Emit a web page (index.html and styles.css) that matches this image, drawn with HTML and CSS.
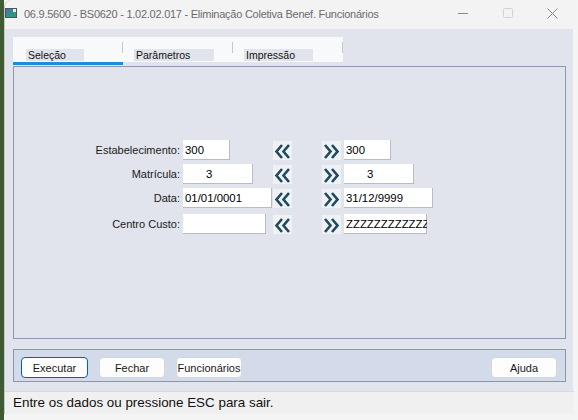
FILE: index.html
```html
<!DOCTYPE html>
<html lang="pt">
<head>
 <meta charset="UTF-8">
 <title>Eliminação Coletiva Benef. Funcionários</title>
 <link rel="stylesheet" href="styles.css">
</head>
<body>
 <div class="window">
  <div class="titlebar">
   <span class="app-icon">
    <svg width="12" height="10" viewBox="0 0 12 10">
     <defs>
      <linearGradient id="g" x1="0" y1="0" x2="1" y2="1">
       <stop offset="0" stop-color="#2f7fb0"/>
       <stop offset="1" stop-color="#3f9a6a"/>
      </linearGradient>
     </defs>
     <rect x="0.5" y="0.5" width="11" height="9" fill="url(#g)" stroke="#4b5560"/>
     <rect x="8" y="1" width="3" height="3" fill="#e8eef2"/>
    </svg>
   </span>
   <span class="title">06.9.5600 - BS0620 - 1.02.02.017 - Eliminação Coletiva Benef. Funcionários</span>
   <div class="controls">
    <span class="ctl">
     <svg width="10" height="10" viewBox="0 0 10 10"><line x1="0" y1="5.5" x2="10" y2="5.5" stroke="#8a8a8a" stroke-width="1"/></svg>
    </span>
    <span class="ctl">
     <svg width="10" height="10" viewBox="0 0 10 10"><rect x="0.5" y="0.5" width="9" height="9" rx="1" fill="none" stroke="#d2d2d2"/></svg>
    </span>
    <span class="ctl">
     <svg width="11" height="11" viewBox="0 0 11 11"><path d="M0.5 0.5 L10.5 10.5 M10.5 0.5 L0.5 10.5" stroke="#8a8a8a" stroke-width="1"/></svg>
    </span>
   </div>
  </div>

  <div class="client">
   <div class="tabs">
    <div class="tab active"><span class="tab-label">Seleção</span><i class="tab-sep"></i></div>
    <div class="tab"><span class="tab-label wide">Parâmetros</span><i class="tab-sep"></i></div>
    <div class="tab"><span class="tab-label">Impressão</span><i class="tab-sep"></i></div>
   </div>

   <div class="panel">
    <div class="form">
     <div class="row">
      <label>Estabelecimento:</label>
      <div class="cell"><div class="field w-short">300</div></div>
      <span class="arrow"><svg width="19" height="19" viewBox="0 0 19 19"><path d="M9 4 L3.5 10.5 L9 17 M16 4 L10.5 10.5 L16 17" fill="none" stroke="#1e4b5c" stroke-width="2.6"/></svg></span>
      <span class="arrow right"><svg width="19" height="19" viewBox="0 0 19 19"><path d="M3 4 L8.5 10.5 L3 17 M10 4 L15.5 10.5 L10 17" fill="none" stroke="#1e4b5c" stroke-width="2.6"/></svg></span>
      <div class="field w-short">300</div>
     </div>
     <div class="row">
      <label>Matrícula:</label>
      <div class="cell"><div class="field w-mid num">3</div></div>
      <span class="arrow"><svg width="19" height="19" viewBox="0 0 19 19"><path d="M9 4 L3.5 10.5 L9 17 M16 4 L10.5 10.5 L16 17" fill="none" stroke="#1e4b5c" stroke-width="2.6"/></svg></span>
      <span class="arrow right"><svg width="19" height="19" viewBox="0 0 19 19"><path d="M3 4 L8.5 10.5 L3 17 M10 4 L15.5 10.5 L10 17" fill="none" stroke="#1e4b5c" stroke-width="2.6"/></svg></span>
      <div class="field w-mid num">3</div>
     </div>
     <div class="row">
      <label>Data:</label>
      <div class="cell"><div class="field w-date">01/01/0001</div></div>
      <span class="arrow"><svg width="19" height="19" viewBox="0 0 19 19"><path d="M9 4 L3.5 10.5 L9 17 M16 4 L10.5 10.5 L16 17" fill="none" stroke="#1e4b5c" stroke-width="2.6"/></svg></span>
      <span class="arrow right"><svg width="19" height="19" viewBox="0 0 19 19"><path d="M3 4 L8.5 10.5 L3 17 M10 4 L15.5 10.5 L10 17" fill="none" stroke="#1e4b5c" stroke-width="2.6"/></svg></span>
      <div class="field w-date">31/12/9999</div>
     </div>
     <div class="row last">
      <label>Centro Custo:</label>
      <div class="cell"><div class="field w-cc"></div></div>
      <span class="arrow"><svg width="19" height="19" viewBox="0 0 19 19"><path d="M9 4 L3.5 10.5 L9 17 M16 4 L10.5 10.5 L16 17" fill="none" stroke="#1e4b5c" stroke-width="2.6"/></svg></span>
      <span class="arrow right"><svg width="19" height="19" viewBox="0 0 19 19"><path d="M3 4 L8.5 10.5 L3 17 M10 4 L15.5 10.5 L10 17" fill="none" stroke="#1e4b5c" stroke-width="2.6"/></svg></span>
      <div class="field w-cc">ZZZZZZZZZZZZZ</div>
     </div>
    </div>
   </div>

   <div class="buttonbar">
    <button class="btn default">Executar</button>
    <button class="btn">Fechar</button>
    <button class="btn">Funcionários</button>
    <button class="btn help">Ajuda</button>
   </div>
  </div>

  <div class="statusbar">Entre os dados ou pressione ESC para sair.</div>
 </div>
</body>
</html>
```

FILE: styles.css
```css
body {
margin: 0;
padding: 0;
height: 420px;
overflow: hidden;
background: linear-gradient(to right, #3e5b33 4px, #f4f4f4 4px);
font-family: 'Liberation Sans', Arial, sans-serif;
color: #1a1a1a;
}
.window {
margin-left: 4px;
width: 569px;
height: 414px;
border-left: 1px solid #c4c8c4;
border-radius: 7px 7px 0 0;
background-color: #f3f3f3;
overflow: hidden;
}
.titlebar {
height: 29px;
display: flex;
align-items: center;
}
.app-icon {
display: flex;
width: 12px;
height: 10px;
margin-top: -3px;
}
.title {
margin-left: 7px;
margin-top: -2px;
font-size: 11px;
letter-spacing: -0.25px;
color: #6b6b6b;
white-space: nowrap;
}
.controls {
display: flex;
margin-left: auto;
margin-right: -1px;
}
.ctl {
width: 45px;
height: 29px;
display: flex;
align-items: center;
justify-content: center;
margin-top: -3px;
}
.client {
height: 362px;
box-sizing: border-box;
margin-right: 1px;
padding: 8px 7px 9px 8px;
background-color: #e1e4ec;
}
.tabs {
display: flex;
align-items: flex-start;
height: 28px;
margin-bottom: 1px;
width: 330px;
}
.tab {
width: 110px;
height: 25px;
box-sizing: border-box;
background-color: #f8f9fb;
display: flex;
align-items: flex-end;
padding-left: 13px;
padding-bottom: 1px;
}
.tab + .tab {
padding-left: 11px;
}
.tab.active {
height: 28px;
border-bottom: 3px solid #1b8ddb;
}
.tab-label {
height: 12px;
line-height: 13px;
font-size: 10.5px;
padding: 0 18px 0 2px;
background-color: #e1e4ec;
color: #111;
}
.tab-label.wide {
padding-right: 24px;
}
.tab-sep {
margin-left: auto;
align-self: flex-start;
margin-top: 5px;
width: 1px;
height: 11px;
background-color: #c4c8d0;
}
.panel {
height: 273px;
box-sizing: border-box;
border: 1px solid #8c98a9;
padding-top: 73px;
}
.form {
display: flex;
flex-direction: column;
gap: 4px;
padding-left: 46px;
}
.row {
display: flex;
align-items: center;
height: 20px;
font-size: 11px;
}
.row.last {
margin-top: 2px;
}
.row label {
width: 120px;
text-align: right;
margin-right: 3px;
color: #1a1a1a;
}
.cell {
width: 90px;
}
.field {
height: 20px;
box-sizing: border-box;
background-color: #fff;
padding: 0 2px;
line-height: 20px;
font-size: 11.4px;
color: #000;
white-space: nowrap;
overflow: hidden;
box-shadow: inset -1px -1px 0 #b8bcc4;
}
.field.num {
padding-left: 23px;
}
.w-short { width: 47px; }
.w-mid { width: 70px; }
.w-date { width: 89px; }
.w-cc { width: 83px; }
.arrow {
width: 19px;
height: 19px;
display: flex;
background-color: #eff1f5;
}
.arrow.right {
margin-left: 30px;
margin-right: 3px;
}
.buttonbar {
margin-top: 10px;
height: 33px;
box-sizing: border-box;
border: 1px solid #8c98a9;
background-color: #d3dbea;
padding: 7px 8px 0 7px;
display: flex;
align-items: flex-start;
gap: 11px;
}
.btn {
width: 66px;
height: 21px;
padding: 0;
border: 1px solid #d4d6da;
border-radius: 4px;
background-color: #fdfdfd;
font-family: 'Liberation Sans', Arial, sans-serif;
font-size: 11px;
color: #1a1a1a;
}
.btn.default {
width: 67px;
border: 1.5px solid #0a5fb4;
}
.btn.help {
margin-left: auto;
}
.statusbar {
height: 23px;
box-sizing: border-box;
border-top: 1px solid #d9d9d9;
background-color: #f0f0f0;
padding-left: 8px;
line-height: 22px;
font-size: 13.4px;
color: #111;
}
```
